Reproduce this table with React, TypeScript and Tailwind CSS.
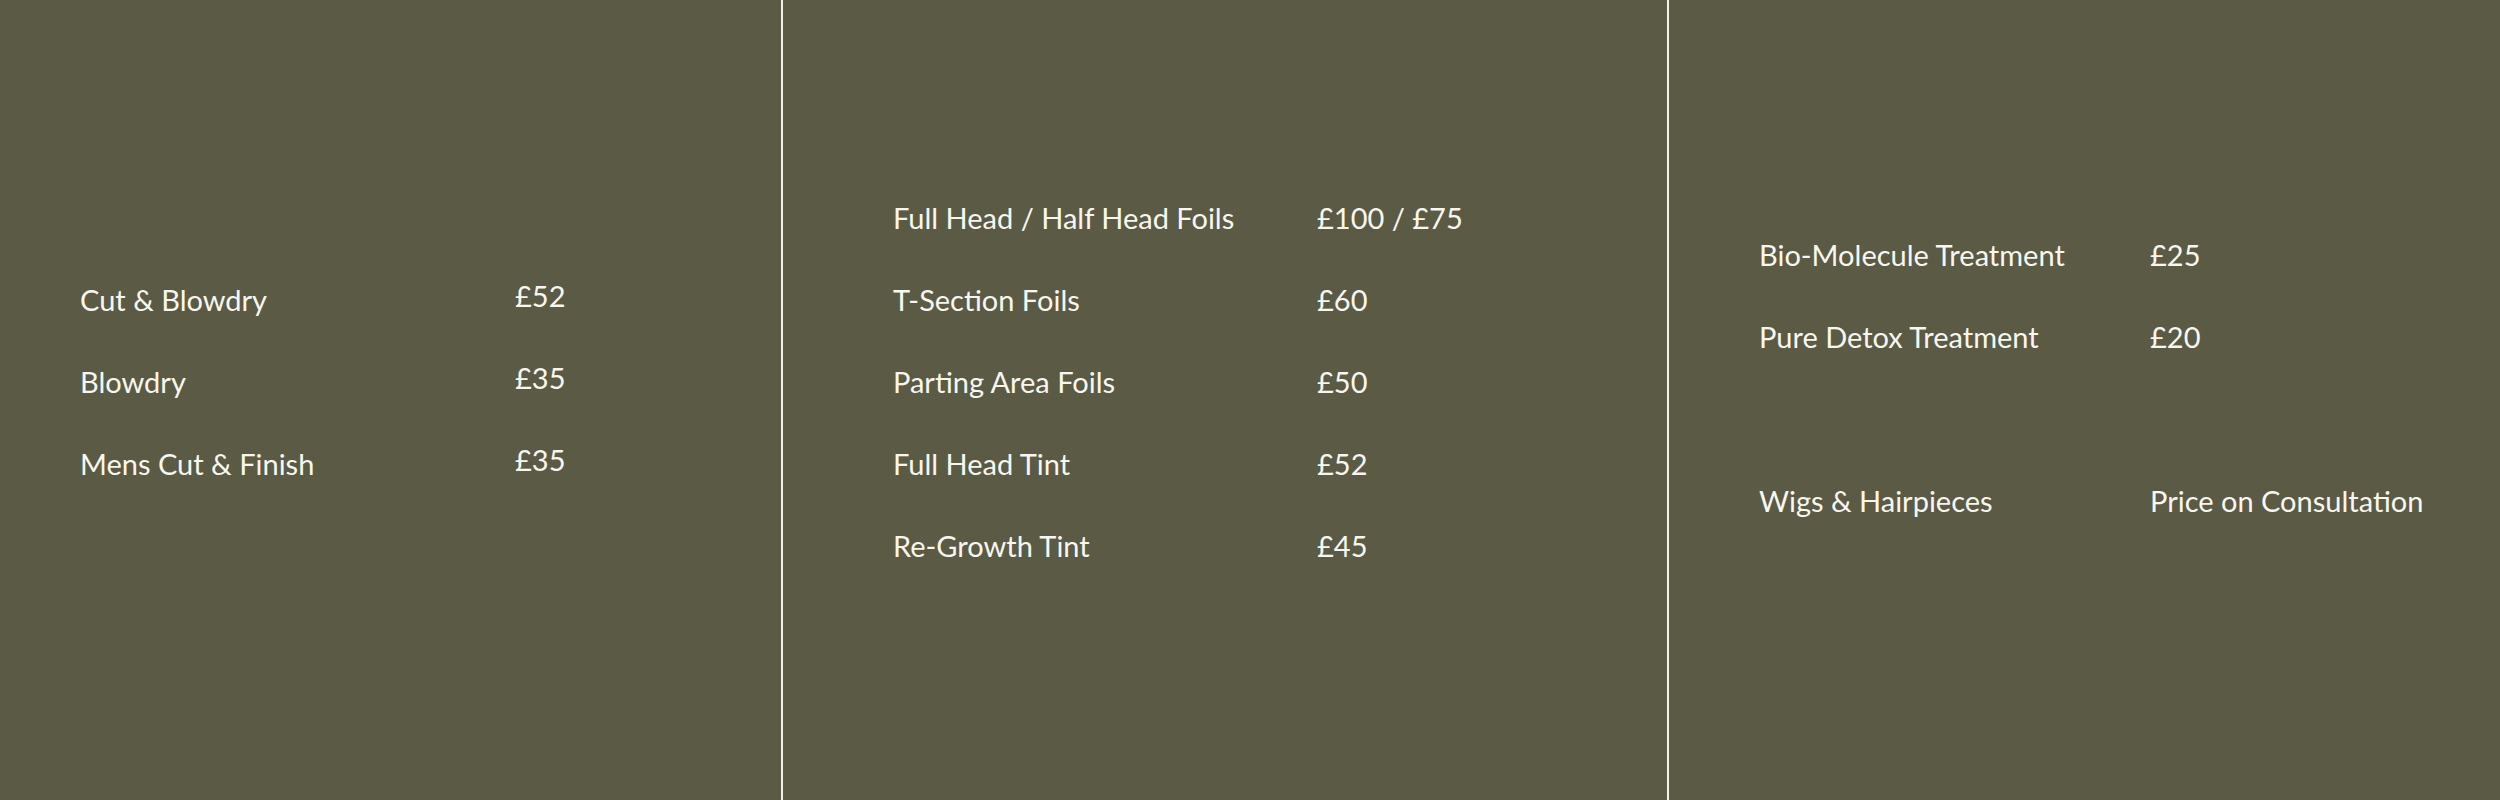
const cuts = [
  { name: "Cut & Blowdry", price: "£52" },
  { name: "Blowdry", price: "£35" },
  { name: "Mens Cut & Finish", price: "£35" },
];

const colour = [
  { name: "Full Head / Half Head Foils", price: "£100 / £75" },
  { name: "T-Section Foils", price: "£60" },
  { name: "Parting Area Foils", price: "£50" },
  { name: "Full Head Tint", price: "£52" },
  { name: "Re-Growth Tint", price: "£45" },
];

const treatments = [
  { name: "Bio-Molecule Treatment", price: "£25" },
  { name: "Pure Detox Treatment", price: "£20" },
  null,
  { name: "Wigs & Hairpieces", price: "Price on Consultation" },
];

function Row({ name, price, labelW, lift }: { name: string; price: string; labelW: string; lift?: boolean }) {
  return (
    <div className="flex h-[82px] items-center">
      <div className={`${labelW} shrink-0`}>{name}</div>
      <div className={lift ? "pb-2" : ""}>{price}</div>
    </div>
  );
}

export default function App() {
  return (
    <div
      className="flex h-[800px] w-[2500px] bg-[#5b5a45] text-[29px] leading-none text-[#f7f6f0]"
      style={{ fontFamily: "Lato, 'Noto Sans', sans-serif" }}
    >
      <section className="flex w-[781px] shrink-0 flex-col justify-center pb-[38px] pl-[80px]">
        {cuts.map((r) => (
          <Row key={r.name} {...r} labelW="w-[435px]" lift />
        ))}
      </section>
      <div className="w-[2px] shrink-0 bg-[#f3f2ea]" />
      <section className="flex w-[884px] shrink-0 flex-col justify-center pb-[38px] pl-[110px]">
        {colour.map((r) => (
          <Row key={r.name} {...r} labelW="w-[424px]" />
        ))}
      </section>
      <div className="w-[2px] shrink-0 bg-[#f3f2ea]" />
      <section className="flex flex-1 flex-col justify-center pb-[46px] pl-[90px]">
        {treatments.map((r, i) =>
          r ? <Row key={r.name} {...r} labelW="w-[391px]" /> : <div key={i} className="h-[82px]" />
        )}
      </section>
    </div>
  );
}
